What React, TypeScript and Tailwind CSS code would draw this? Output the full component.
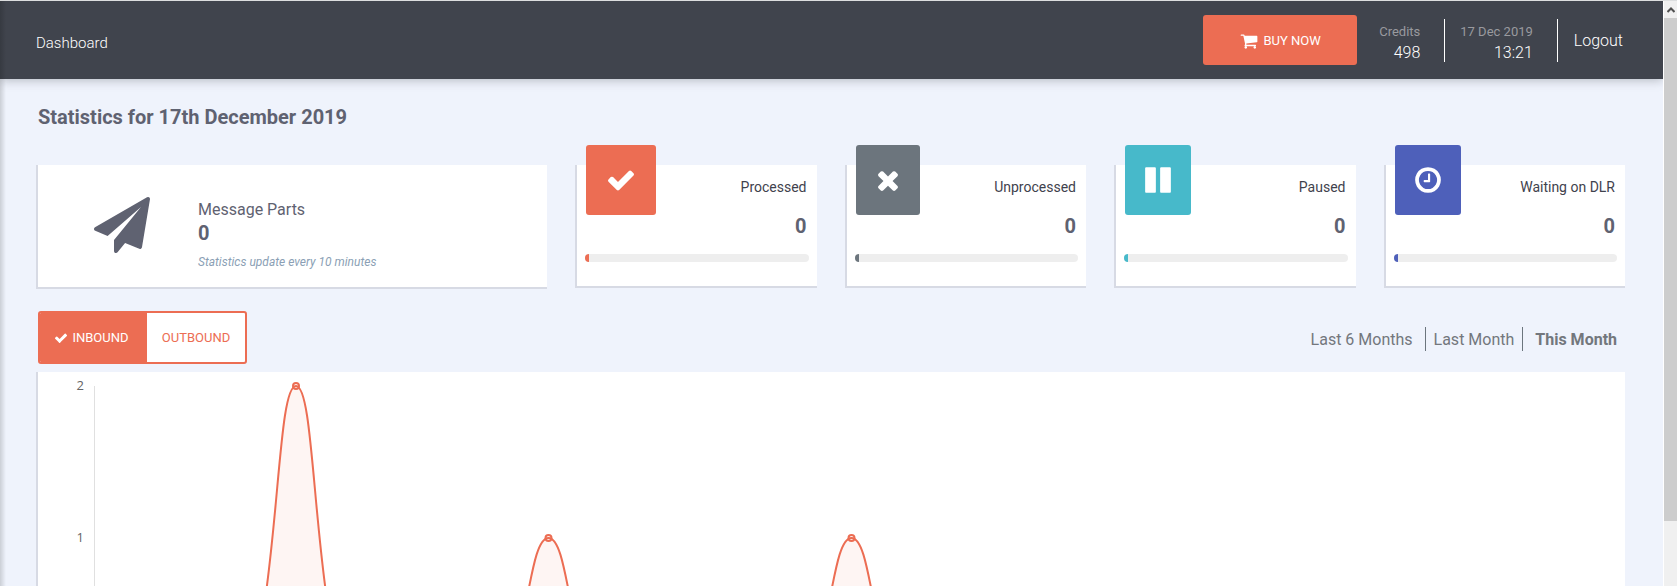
import { useState } from "react";
import type { ReactNode } from "react";

const ICONS = {
  check:
    "M1671 566q0 40-28 68l-724 724-136 136q-28 28-68 28t-68-28l-136-136-362-362q-28-28-28-68t28-68l136-136q28-28 68-28t68 28l294 295 656-657q28-28 68-28t68 28l136 136q28 28 28 68z",
  times:
    "M1490 1322q0 40-28 68l-136 136q-28 28-68 28t-68-28l-294-294-294 294q-28 28-68 28t-68-28l-136-136q-28-28-28-68t28-68l294-294-294-294q-28-28-28-68t28-68l136-136q28-28 68-28t68 28l294 294 294-294q28-28 68-28t68 28l136 136q28 28 28 68t-28 68l-294 294 294 294q28 28 28 68z",
  pause:
    "M1664 192v1408q0 26-19 45t-45 19h-512q-26 0-45-19t-19-45v-1408q0-26 19-45t45-19h512q26 0 45 19t19 45zm-896 0v1408q0 26-19 45t-45 19h-512q-26 0-45-19t-19-45v-1408q0-26 19-45t45-19h512q26 0 45 19t19 45z",
  clock:
    "M1024 544v448q0 14-9 23t-23 9h-320q-14 0-23-9t-9-23v-64q0-14 9-23t23-9h224v-352q0-14 9-23t23-9h64q14 0 23 9t9 23zm416 352q0-148-73-273t-198-198-273-73-273 73-198 198-73 273 73 273 198 198 273 73 273-73 198-198 73-273zm224 0q0 209-103 385.5t-279.5 279.5-385.5 103-385.5-103-279.5-279.5-103-385.5 103-385.5 279.5-279.5 385.5-103 385.5 103 279.5 279.5 103 385.5z",
  cart: "M704 1536q0 52-38 90t-90 38-90-38-38-90 38-90 90-38 90 38 38 90zm896 0q0 52-38 90t-90 38-90-38-38-90 38-90 90-38 90 38 38 90zm128-1088v512q0 24-16.5 42.500t-40.5 21.500l-1044 122q13 60 13 70 0 16-24 64h920q26 0 45 19t19 45-19 45-45 19h-1024q-26 0-45-19t-19-45q0-11 8-31.500t16-36 21.500-40 15.500-29.500l-177-823h-204q-26 0-45-19t-19-45 19-45 45-19h256q16 0 28.500 6.500t19.500 15.500 13 24.500 8 26 5.500 29.500 4.500 26h1201q26 0 45 19t19 45z",
  plane:
    "M1764 11q33 24 27 64l-256 1536q-5 29-32 45-14 8-31 8-11 0-24-5l-453-185-242 295q-18 23-49 23-13 0-22-4-19-7-30.500-23.500t-11.500-36.500v-349l864-1059-1069 925-395-162q-37-14-40-55-2-40 32-59l1664-960q15-9 32-9 20 0 36 11z",
};

function Icon({ name, className }: { name: keyof typeof ICONS; className: string }) {
  return (
    <svg viewBox="0 0 1792 1792" className={className} fill="currentColor" aria-hidden="true">
      <path d={ICONS[name]} />
    </svg>
  );
}

type Stat = { label: string; value: number; icon: keyof typeof ICONS; color: string; tile: string };

const STATS: Stat[] = [
  { label: "Processed", value: 0, icon: "check", color: "bg-[#ec6d53]", tile: "w-[70px]" },
  { label: "Unprocessed", value: 0, icon: "times", color: "bg-[#6c757d]", tile: "w-16" },
  { label: "Paused", value: 0, icon: "pause", color: "bg-[#47b9ca]", tile: "w-[66px]" },
  { label: "Waiting on DLR", value: 0, icon: "clock", color: "bg-[#4e60ba]", tile: "w-[66px]" },
];

function StatCard({ stat }: { stat: Stat }) {
  return (
    <section className="relative h-[123px] border-b-2 border-l-2 border-[#d7dae4] bg-white pt-3 pr-2 pl-2">
      <div
        className={`absolute -top-5 left-[9px] flex h-[70px] items-center justify-center rounded-[3px] pb-px text-white ${stat.color} ${stat.tile}`}
      >
        <Icon name={stat.icon} className="size-[30px]" />
      </div>
      <h2 className="pr-[2px] text-right text-sm leading-5 text-[#3f424d]">{stat.label}</h2>
      <p className="mt-[15px] pr-[2px] text-right text-xl leading-7 font-bold text-[#5f6271]">{stat.value}</p>
      <div className="mt-[14px] h-2 overflow-hidden rounded-full bg-[#eeeeee]">
        <div className={`h-full w-[2%] ${stat.color}`} />
      </div>
    </section>
  );
}

const DAY = 50.5;
const UNIT = 152;
const X0 = 56;
const TOP = 14;
const BASE = TOP + UNIT * 2;
const TENSION = 0.4;
const INBOUND = [0, 0, 0, 0, 2, 0, 0, 0, 0, 1, 0, 0, 0, 0, 0, 1, 0, 0];

function curve(values: number[]) {
  const pts = values.map((v, i) => ({ x: X0 + i * DAY, y: BASE - v * UNIT }));
  const cap = (y: number) => Math.min(BASE, Math.max(TOP, y));
  const handles = pts.map((p, i) => {
    const a = pts[i - 1] ?? p;
    const b = pts[i + 1] ?? p;
    const d0 = Math.hypot(p.x - a.x, p.y - a.y);
    const d1 = Math.hypot(b.x - p.x, b.y - p.y);
    const f0 = (TENSION * d0) / (d0 + d1);
    const f1 = (TENSION * d1) / (d0 + d1);
    return {
      inX: p.x - f0 * (b.x - a.x),
      inY: cap(p.y - f0 * (b.y - a.y)),
      outX: p.x + f1 * (b.x - a.x),
      outY: cap(p.y + f1 * (b.y - a.y)),
    };
  });
  let d = `M${pts[0].x} ${pts[0].y}`;
  for (let i = 1; i < pts.length; i++) {
    const o = handles[i - 1];
    const n = handles[i];
    d += `C${o.outX} ${o.outY} ${n.inX} ${n.inY} ${pts[i].x} ${pts[i].y}`;
  }
  return { d, pts };
}

function Chart() {
  const { d, pts } = curve(INBOUND);
  return (
    <svg viewBox="0 0 1587 350" className="block h-auto w-full" role="img" aria-label="Inbound messages this month">
      <line x1="56.5" y1="14" x2="56.5" y2="328" stroke="#e0e0e0" />
      <path d={d} fill="#ec6d53" fillOpacity="0.07" stroke="#ec6d53" strokeWidth="2" />
      {pts.map((p) => (
        <circle key={p.x} cx={p.x} cy={p.y} r="3" fill="#ec6d53" fillOpacity="0.07" stroke="#ec6d53" strokeWidth="2" />
      ))}
      {[2, 1].map((n) => (
        <text
          key={n}
          x="46"
          y={BASE - n * UNIT + 4}
          textAnchor="end"
          className="fill-[#666666] font-['Open_Sans',sans-serif] text-[13px]"
        >
          {n}
        </text>
      ))}
    </svg>
  );
}

function HeaderBlock({ label, children }: { label: string; children: ReactNode }) {
  return (
    <div className="pt-[5px] text-right">
      <div className="text-[13px] leading-5 text-[#999a9f]">{label}</div>
      <div className="text-base leading-[22px] font-light text-white">{children}</div>
    </div>
  );
}

export default function App() {
  const [tab, setTab] = useState("inbound");
  return (
    <div className="flex h-screen overflow-hidden border-t border-[#dcdedf] bg-[#eff3fc] font-['Roboto',sans-serif]">
      <div className="relative min-w-0 flex-1 overflow-hidden">
        <header className="flex h-[78px] items-center bg-[#40444d] pr-10 pl-9 shadow-[0_1px_10px_rgba(64,68,77,0.35)]">
          <h1 className="mt-[6px] flex-1 text-[15px] font-light text-white">Dashboard</h1>
          <button className="mr-[22px] flex h-[50px] w-[154px] items-center justify-center gap-[6px] rounded-[3px] bg-[#ec6d53] pt-px text-[13px] text-white">
            <Icon name="cart" className="size-[18px]" />
            BUY NOW
          </button>
          <HeaderBlock label="Credits">498</HeaderBlock>
          <div className="mr-[15px] ml-6 h-[43px] w-px bg-white" />
          <HeaderBlock label="17 Dec 2019">13:21</HeaderBlock>
          <div className="mr-4 ml-6 h-[43px] w-px bg-white" />
          <a href="#logout" className="pt-[2px] text-base font-light text-white">
            Logout
          </a>
        </header>

        <main className="pr-[38px] pl-9">
          <h2 className="pt-6 pl-[2px] text-xl leading-7 font-bold text-[#5f6271]">Statistics for 17th December 2019</h2>

          <div className="mt-[34px] grid grid-cols-6 items-start gap-7">
            <section className="col-span-2 flex h-[124px] items-center border-b-2 border-l-2 border-[#d7dae4] bg-white pl-14 text-[#5f6271]">
              <Icon name="plane" className="mt-[-3px] size-14" />
              <div className="mt-4 ml-12">
                <h2 className="text-base leading-6">Message Parts</h2>
                <p className="text-xl leading-[22px] font-bold">0</p>
                <p className="mt-[10px] text-xs leading-4 text-[#8b9fb5] italic">Statistics update every 10 minutes</p>
              </div>
            </section>
            {STATS.map((s) => (
              <StatCard key={s.label} stat={s} />
            ))}
          </div>

          <div className="mt-[22px] flex h-[53px] items-stretch justify-between pl-[2px]">
            <div className="flex overflow-hidden rounded-[3px] border-2 border-[#ec6d53] bg-white text-[13px]">
              <button
                onClick={() => setTab("inbound")}
                aria-pressed={tab === "inbound"}
                className="flex w-[107px] items-center justify-center gap-1 bg-[#ec6d53] pr-1 text-white"
              >
                <Icon name="check" className="size-[14px]" />
                INBOUND
              </button>
              <button
                onClick={() => setTab("outbound")}
                aria-pressed={tab === "outbound"}
                className="w-[98px] text-[#ec6d53]"
              >
                OUTBOUND
              </button>
            </div>
            <nav className="mt-4 mr-2 flex h-6 items-stretch text-base leading-[26px] text-[#73777d]">
              <a href="#six-months" className="border-r border-[#6c757d] pr-3">
                Last 6 Months
              </a>
              <a href="#last-month" className="border-r border-[#6c757d] px-2">
                Last Month
              </a>
              <a href="#this-month" className="pl-3 font-bold">
                This Month
              </a>
            </nav>
          </div>

          <section className="mt-2 border-l-2 border-[#d7dae4] bg-white">
            <Chart />
          </section>
        </main>
        <div className="pointer-events-none absolute inset-y-0 left-0 w-[6px] bg-linear-to-r from-black/15 to-transparent" />
      </div>

      <div className="flex w-[14px] flex-col border-l border-white bg-[#f0f0f0]" aria-hidden="true">
        <div className="flex h-[17px] items-center justify-center">
          <svg viewBox="0 0 8 6" className="h-[6px] w-2" fill="none" stroke="#505050" strokeWidth="2">
            <path d="M0.500 5L4 1.500L7.500 5" />
          </svg>
        </div>
        <div className="h-[503px] bg-[#cdcdcd]" />
      </div>
    </div>
  );
}
